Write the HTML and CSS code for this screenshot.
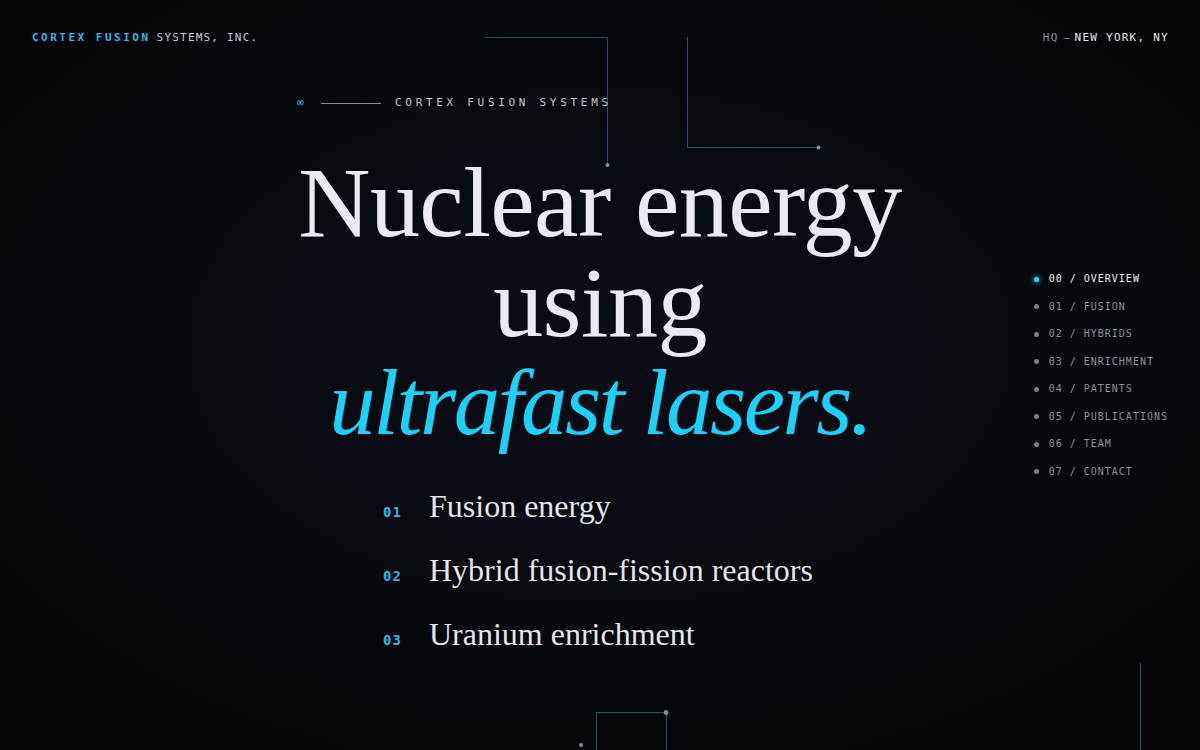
FILE: index.html
```html
<!DOCTYPE html>
<html lang="en">
<head>
<meta charset="utf-8">
<title>Cortex Fusion Systems</title>
<link rel="stylesheet" href="styles.css">
</head>
<body>
<div class="page">
  <svg class="circuit" width="1200" height="750" viewBox="0 0 1200 750" aria-hidden="true">
    <g class="trace">
      <path d="M485 37.5 H607.5 V165"/>
      <path d="M687.5 37 V147.5 H818"/>
      <path d="M596.5 750 V712.5 H666.5 V750"/>
      <path d="M1140.5 663 V750"/>
    </g>
    <g class="node">
      <circle cx="607.5" cy="165" r="2"/>
      <circle cx="818.5" cy="147.5" r="2"/>
      <circle cx="666" cy="712.5" r="2.4"/>
      <circle cx="581" cy="745" r="2"/>
    </g>
  </svg>

  <header class="topbar">
    <div class="brand"><span class="brand-main">CORTEX FUSION</span><span class="brand-sub">SYSTEMS, INC.</span></div>
    <div class="hq"><span class="hq-label">HQ</span><span class="hq-dash">—</span><span class="hq-city">NEW YORK, NY</span></div>
  </header>

  <main class="main">
    <section class="hero">
      <div class="eyebrow">
        <span class="eyebrow-icon">∞</span>
        <span class="eyebrow-rule"></span>
        <span class="eyebrow-text">CORTEX FUSION SYSTEMS</span>
      </div>
      <h1 class="headline">
        <span class="headline-line">Nuclear energy</span>
        <span class="headline-line">using</span>
        <em class="headline-accent">ultrafast lasers.</em>
      </h1>
      <ol class="areas">
        <li class="area"><span class="area-num">01</span><span class="area-name">Fusion energy</span></li>
        <li class="area"><span class="area-num">02</span><span class="area-name">Hybrid fusion-fission reactors</span></li>
        <li class="area"><span class="area-num">03</span><span class="area-name">Uranium enrichment</span></li>
      </ol>
    </section>

    <nav class="sections">
      <a class="section-link is-active"><span class="dot"></span>00 / OVERVIEW</a>
      <a class="section-link"><span class="dot"></span>01 / FUSION</a>
      <a class="section-link"><span class="dot"></span>02 / HYBRIDS</a>
      <a class="section-link"><span class="dot"></span>03 / ENRICHMENT</a>
      <a class="section-link"><span class="dot"></span>04 / PATENTS</a>
      <a class="section-link"><span class="dot"></span>05 / PUBLICATIONS</a>
      <a class="section-link"><span class="dot"></span>06 / TEAM</a>
      <a class="section-link"><span class="dot"></span>07 / CONTACT</a>
    </nav>
  </main>
</div>
</body>
</html>
```

FILE: styles.css
```css
* { box-sizing: border-box; }

html, body {
  margin: 0;
  padding: 0;
  width: 1200px;
  height: 750px;
  overflow: hidden;
  background: #05070c;
}

.page {
  position: relative;
  width: 1200px;
  height: 750px;
  overflow: hidden;
  background: radial-gradient(ellipse 62% 62% at 50% 46%, #0a0d16 0%, #07090f 55%, #030407 100%);
  font-family: "DejaVu Sans Mono", "Liberation Mono", monospace;
  color: #d9dbe2;
}

.circuit {
  position: absolute;
  left: 0;
  top: 0;
  pointer-events: none;
}
.trace path {
  fill: none;
  stroke: #145a6b;
  stroke-width: 1;
}
.node circle { fill: #7f919b; }

/* header */
.topbar {
  position: relative;
  display: flex;
  justify-content: space-between;
  align-items: center;
  padding: 31px 32px 0 32px;
  font-size: 11px;
  line-height: 14px;
}
.brand { display: flex; }
.brand-main {
  color: #2cb9e2;
  font-weight: bold;
  letter-spacing: 2.5px;
  margin-right: 6px;
}
.brand-sub {
  color: #c9ccd3;
  letter-spacing: 1.2px;
}
.hq { display: flex; align-items: center; letter-spacing: 1.2px; }
.hq-label { color: #8b8f98; }
.hq-dash { color: #8b8f98; margin: 0 5px 0 5px; letter-spacing: 0; font-size: 10px; }
.hq-city { color: #e6e7ec; letter-spacing: 1.25px; margin-right: -1px; }

/* main grid */
.main {
  position: relative;
  display: grid;
  grid-template-columns: 1fr 610px 1fr;
}

.hero {
  grid-column: 2;
  display: flex;
  flex-direction: column;
  padding-top: 51px;
}

.eyebrow {
  display: flex;
  align-items: center;
  height: 14px;
  margin-left: 2px;
}
.eyebrow-icon {
  color: #2cc3ea;
  font-size: 11px;
  line-height: 14px;
  width: 24px;
}
.eyebrow-rule {
  width: 60px;
  height: 1px;
  background: #8a8e97;
  margin-right: 14px;
}
.eyebrow-text {
  font-size: 11px;
  line-height: 14px;
  letter-spacing: 3.7px;
  color: #c4c7cf;
}

.headline {
  margin: 43px 0 0 0;
  font-family: "Liberation Serif", "Times New Roman", serif;
  font-weight: normal;
  text-align: center;
  color: #ebe9f2;
  font-size: 100px;
  line-height: 100px;
  letter-spacing: -0.6px;
}
.headline-line { display: block; }
.headline-accent {
  display: block;
  font-size: 93px;
  color: #1cd1f6;
  letter-spacing: -2.5px;
}

.areas {
  list-style: none;
  margin: 21px 0 0 0;
  padding: 0 0 0 88px;
}
.area {
  display: flex;
  align-items: baseline;
  line-height: 64px;
  height: 64px;
}
.area-num {
  width: 46px;
  font-family: "DejaVu Sans Mono", "Liberation Mono", monospace;
  font-weight: bold;
  font-size: 14px;
  letter-spacing: 1px;
  color: #2ab8df;
}
.area-name {
  font-family: "Liberation Serif", "Times New Roman", serif;
  font-size: 32px;
  color: #e6e4ec;
}

/* section nav */
.sections {
  grid-column: 3;
  justify-self: end;
  align-self: start;
  display: flex;
  flex-direction: column;
  gap: 13.5px;
  margin-top: 227px;
  margin-right: 32px;
}
.section-link {
  display: flex;
  align-items: center;
  font-size: 10px;
  line-height: 14px;
  letter-spacing: 1px;
  color: #8c909a;
  white-space: nowrap;
}
.section-link .dot {
  width: 5px;
  height: 5px;
  border-radius: 50%;
  background: #7b8089;
  margin: 0 10px 0 1px;
}
.section-link.is-active { color: #eef0f4; }
.section-link.is-active .dot {
  background: #31d2f7;
  box-shadow: 0 0 4px 1px rgba(49, 210, 247, 0.6);
}
```
